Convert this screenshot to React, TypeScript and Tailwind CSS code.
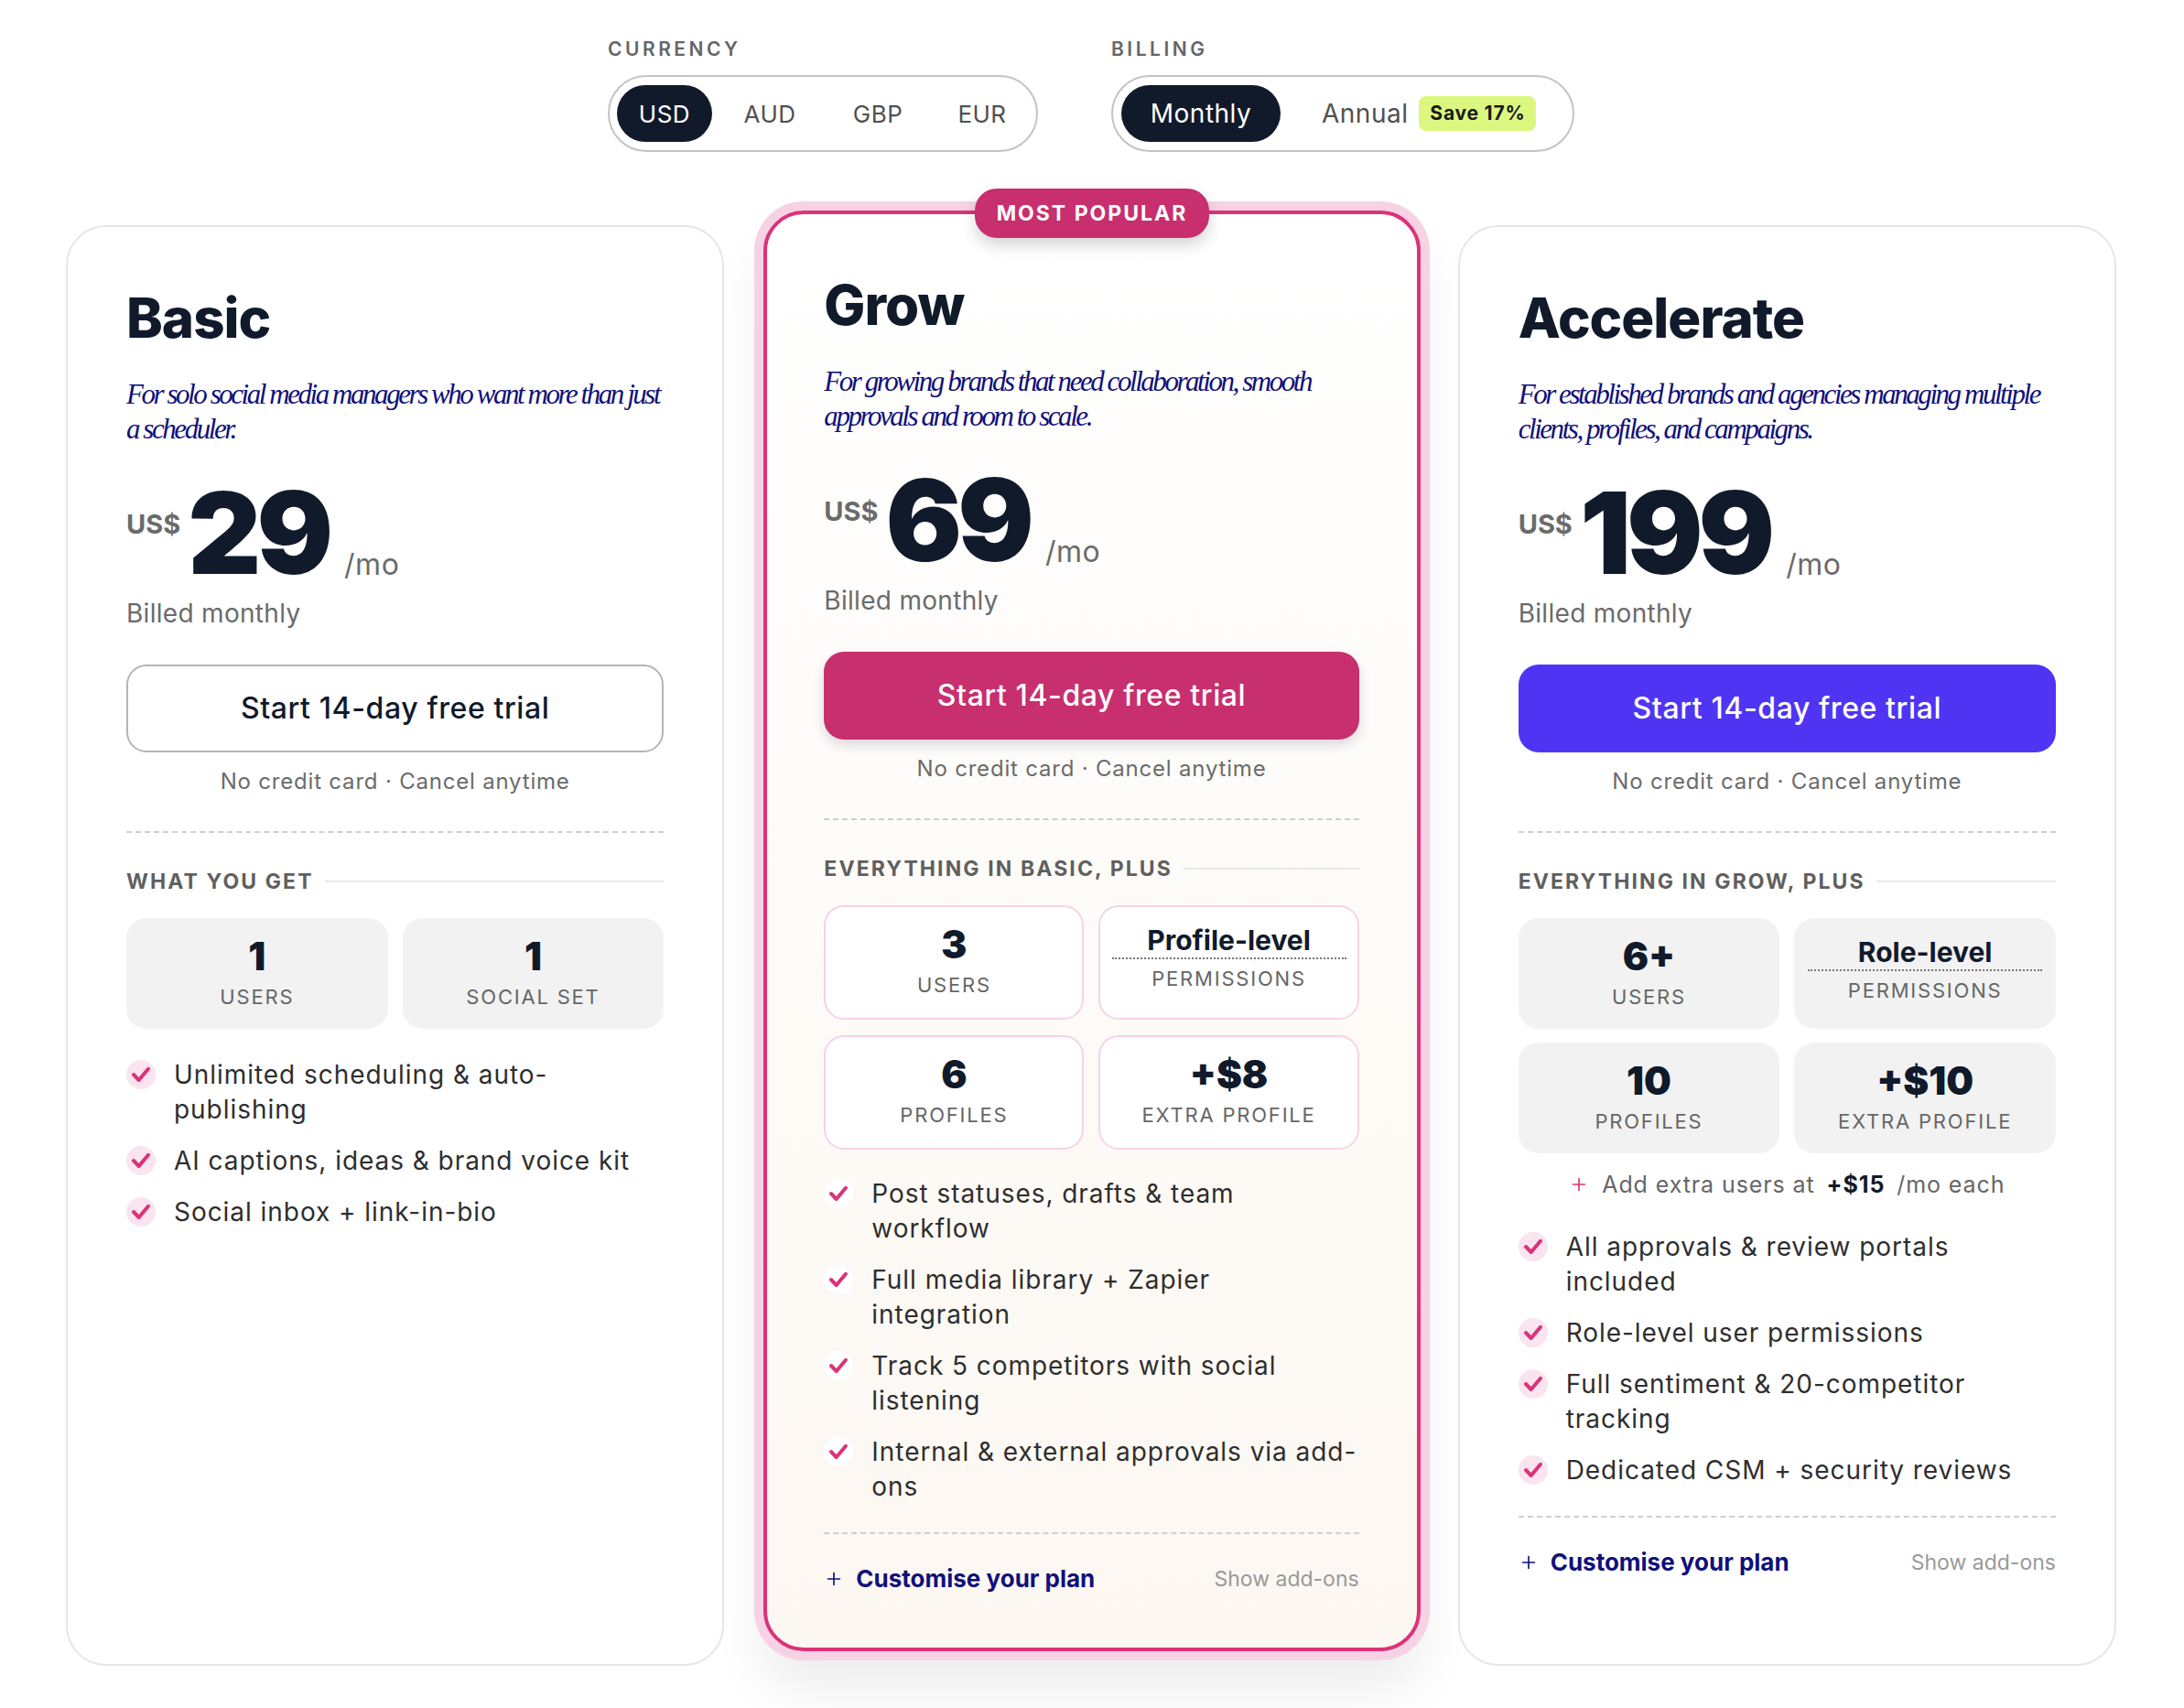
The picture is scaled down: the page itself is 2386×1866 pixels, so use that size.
import { Plus } from "lucide-react";

const sans = "font-['Inter',sans-serif]";

type Stat = { value: string; label: string; dotted?: boolean };

type Plan = {
  name: string;
  desc: string[];
  price: string;
  cta: string;
  heading: string;
  stats: Stat[];
  extra?: boolean;
  features: string[];
  customise?: boolean;
};

const basic: Plan = {
  name: "Basic",
  desc: ["For solo social media managers who want more than just", "a scheduler."],
  price: "29",
  cta: "border-2 border-[#b5b5b5] bg-white text-[#111a2b]",
  heading: "WHAT YOU GET",
  stats: [
    { value: "1", label: "USERS" },
    { value: "1", label: "SOCIAL SET" },
  ],
  features: ["Unlimited scheduling & auto-\npublishing", "AI captions, ideas & brand voice kit", "Social inbox + link-in-bio"],
};

const grow: Plan = {
  name: "Grow",
  desc: ["For growing brands that need collaboration, smooth", "approvals and room to scale."],
  price: "69",
  cta: "bg-[#c72f6e] text-white shadow-[0_6px_14px_rgba(0,0,0,0.14)]",
  heading: "EVERYTHING IN BASIC, PLUS",
  stats: [
    { value: "3", label: "USERS" },
    { value: "Profile-level", label: "PERMISSIONS", dotted: true },
    { value: "6", label: "PROFILES" },
    { value: "+$8", label: "EXTRA PROFILE" },
  ],
  features: [
    "Post statuses, drafts & team\nworkflow",
    "Full media library + Zapier\nintegration",
    "Track 5 competitors with social\nlistening",
    "Internal & external approvals via add-\nons",
  ],
  customise: true,
};

const accelerate: Plan = {
  name: "Accelerate",
  desc: ["For established brands and agencies managing multiple", "clients, profiles, and campaigns."],
  price: "199",
  cta: "bg-[#4f35f3] text-white",
  heading: "EVERYTHING IN GROW, PLUS",
  stats: [
    { value: "6+", label: "USERS" },
    { value: "Role-level", label: "PERMISSIONS", dotted: true },
    { value: "10", label: "PROFILES" },
    { value: "+$10", label: "EXTRA PROFILE" },
  ],
  extra: true,
  features: [
    "All approvals & review portals\nincluded",
    "Role-level user permissions",
    "Full sentiment & 20-competitor\ntracking",
    "Dedicated CSM + security reviews",
  ],
  customise: true,
};

const CheckMark = () => (
  <svg viewBox="0 0 32 32" className="h-[32px] w-[32px]" fill="none">
    <path d="M8 16 L13.7 22 L24 9.8" stroke="#dc3278" strokeWidth="4" strokeLinecap="round" strokeLinejoin="round" />
  </svg>
);

const StatBox = ({ stat, featured }: { stat: Stat; featured: boolean }) => (
  <div
    className={`flex flex-col items-center rounded-[22px] ${
      featured ? "h-[125px] border-2 border-[#f6d3e5] bg-white pt-[18px]" : "h-[121px] bg-[#f2f2f2] pt-[19px]"
    }`}
  >
    {stat.dotted ? (
      <span className="w-[256px] border-b-2 border-dotted border-[#777] pb-[1px] text-center text-[30px] leading-[36px] font-bold text-[#111a2b]">
        {stat.value}
      </span>
    ) : (
      <span className="text-[42px] leading-[46px] font-black text-[#111a2b]">{stat.value}</span>
    )}
    <span className={`text-[22px] leading-[28px] tracking-[1.8px] text-[#666] ${stat.dotted ? "mt-[7px]" : "mt-[7px]"}`}>
      {stat.label}
    </span>
  </div>
);

const PlanCard = ({ plan, featured = false }: { plan: Plan; featured?: boolean }) => (
  <div
    className={`relative flex flex-col ${sans} ${
      featured
        ? "-mt-[16px] mb-[16px] ml-[2px] rounded-[44px] border-4 border-[#dc3278] bg-gradient-to-b from-white to-[#fcf7f1] pr-[63px] pl-[62px] shadow-[0_0_0_10px_#f6d2e4,0_40px_60px_rgba(0,0,0,0.08)]"
        : "rounded-[44px] border-2 border-[#e6e6e6] bg-white px-[64px]"
    }`}
  >
    {featured && (
      <div className="absolute top-[-28px] left-1/2 flex h-[54px] w-[256px] -translate-x-1/2 items-center justify-center rounded-[24px] bg-[#c72f6e] text-[23px] font-bold tracking-[2px] text-white shadow-[0_8px_16px_rgba(0,0,0,0.16)]">
        MOST POPULAR
      </div>
    )}
    <h2 className="mt-[67px] text-[60px] leading-[64px] font-extrabold tracking-[-1px] text-[#111a2b]">{plan.name}</h2>
    <p className="mt-[33px] font-['Liberation_Serif',serif] text-[31px] leading-[38px] tracking-[-2.45px] whitespace-pre text-[#10107a] italic">
      {plan.desc.join("\n")}
    </p>
    <div className="mt-[32px] flex items-start">
      <span className="mt-[35px] text-[29px] leading-[36px] font-bold text-[#6b6b6b]">US$</span>
      <span className="ml-[8px] text-[124px] leading-[125px] font-black tracking-[-5px] text-[#111a2b]">{plan.price}</span>
      <span className="mt-[79px] ml-[17px] text-[32px] leading-[36px] tracking-[0.5px] text-[#6b6b6b]">/mo</span>
    </div>
    <div className="mt-[11px] text-[28px] leading-[28px] tracking-[0.3px] text-[#6b6b6b]">Billed monthly</div>
    <button className={`mt-[42px] h-[96px] w-full rounded-[22px] text-[32px] font-medium tracking-[0.6px] ${plan.cta}`}>
      Start 14-day free trial
    </button>
    <div className="mt-[18px] text-center text-[24px] leading-[28px] tracking-[0.8px] text-[#6b6b6b]">
      No credit card · Cancel anytime
    </div>
    <div className="mt-[40px] border-t-2 border-dashed border-[#cfcfcf]" />
    <div className="mt-[41px] flex items-center gap-[12px]">
      <span className="text-[23px] leading-[24px] font-bold tracking-[2.1px] whitespace-nowrap text-[#5f5f5f]">
        {plan.heading}
      </span>
      <span className="h-[2px] flex-1 bg-[#e8e8e8]" />
    </div>
    <div className={`mt-[28px] grid grid-cols-2 gap-x-[16px] ${featured ? "gap-y-[17px]" : "gap-y-[15px]"}`}>
      {plan.stats.map((stat) => (
        <StatBox key={stat.label} stat={stat} featured={featured} />
      ))}
    </div>
    {plan.extra && (
      <div className="mt-[20px] flex items-center justify-center text-[25px] leading-[28px] tracking-[0.9px] text-[#666]">
        <Plus className="mr-[14px] text-[#dc3278]" size={22} strokeWidth={1.8} />
        Add extra users at
        <b className="mx-[13px] font-bold text-[#111a2b]">+$15</b>
        /mo each
      </div>
    )}
    <ul className={`flex flex-col gap-[18px] ${plan.extra ? "mt-[35px]" : featured ? "mt-[29px]" : "mt-[31px]"}`}>
      {plan.features.map((f) => (
        <li key={f} className="flex items-start gap-[20px]">
          <span
            className={`mt-[3px] flex h-[32px] w-[32px] flex-none items-center justify-center rounded-full ${
              featured ? "bg-white" : "bg-[#f9e4ef]"
            }`}
          >
            <CheckMark />
          </span>
          <span className="text-[28px] leading-[38px] tracking-[0.95px] whitespace-pre text-[#2e2e2e]">{f}</span>
        </li>
      ))}
    </ul>
    {plan.customise && (
      <>
        <div className="mt-[31px] border-t-2 border-dashed border-[#cfcfcf]" />
        <div className="mt-[34px] flex items-center">
          <Plus className="mr-[13px] text-[#10107a]" size={22} strokeWidth={1.8} />
          <span className="text-[26px] leading-[30px] font-bold text-[#10107a]">Customise your plan</span>
          <span className="ml-auto text-[23px] leading-[30px] text-[#9a9a9a]">Show add-ons</span>
        </div>
      </>
    )}
  </div>
);

export default function App() {
  return (
    <div className={`h-[1866px] w-[2386px] bg-white pr-[74px] pl-[72px] ${sans}`}>
      <div className="flex justify-center gap-[80px] pt-[42px]">
        <div className="flex flex-col">
          <span className="text-[21px] leading-[24px] font-semibold tracking-[3.5px] text-[#666]">CURRENCY</span>
          <div className="mt-[16px] flex h-[84px] w-[470px] items-center rounded-full border-2 border-[#c4c4c4] pl-[8px] text-[26px] tracking-[0.5px] text-[#505050]">
            <span className="flex h-[62px] w-[104px] items-center justify-center rounded-full bg-[#111a2b] text-white">USD</span>
            <span className="w-[126px] text-center">AUD</span>
            <span className="w-[110px] text-center">GBP</span>
            <span className="w-[118px] text-center">EUR</span>
          </div>
        </div>
        <div className="flex flex-col">
          <span className="text-[21px] leading-[24px] font-semibold tracking-[3.5px] text-[#666]">BILLING</span>
          <div className="mt-[16px] flex h-[84px] w-[506px] items-center rounded-full border-2 border-[#c4c4c4] pl-[9px] text-[28px] tracking-[0.5px] text-[#505050]">
            <span className="flex h-[62px] w-[174px] items-center justify-center rounded-full bg-[#111a2b] text-white">Monthly</span>
            <span className="ml-[45px]">Annual</span>
            <span className="ml-[12px] flex h-[38px] w-[128px] items-center justify-center rounded-[8px] bg-[#dcf77f] text-[21px] font-bold tracking-[0.8px] text-[#1a1a1a]">
              Save 17%
            </span>
          </div>
        </div>
      </div>
      <div className="mt-[80px] grid h-[1574px] grid-cols-3 gap-x-[41px]">
        <PlanCard plan={basic} />
        <PlanCard plan={grow} featured />
        <PlanCard plan={accelerate} />
      </div>
    </div>
  );
}
